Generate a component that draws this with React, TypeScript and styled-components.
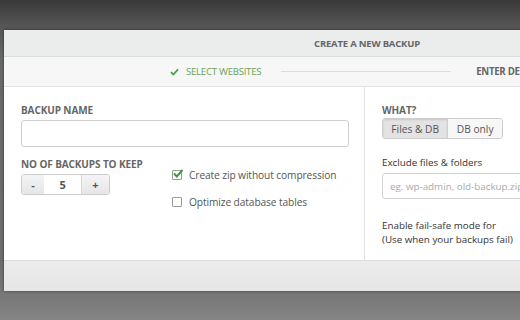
import React from "react";
import styled, { createGlobalStyle } from "styled-components";

const Global = createGlobalStyle`
  html, body { margin: 0; padding: 0; }
  body {
    width: 520px;
    height: 320px;
    overflow: hidden;
    background: linear-gradient(180deg, #383838 0px, #555 25px, #6a6a6a 60px, #6f6f6f 260px, #7a7a7a 300px, #858585 320px);
    font-family: "Open Sans", "DejaVu Sans", sans-serif;
  }
`;

const Page = styled.div`
  padding: 30px 0 0 4px;
`;

const Panel = styled.div`
  width: 726px;
  background: #fff;
  box-shadow: 0 0 3px rgba(0, 0, 0, 0.5);
  display: flex;
  flex-direction: column;
`;

const Header = styled.div`
  height: 26px;
  background: #ebeded;
  border-bottom: 1px solid #dcdede;
  display: flex;
  align-items: center;
  justify-content: center;
  font-size: 9.5px;
  font-weight: 700;
  color: #666;
  letter-spacing: -0.2px;
`;

const Steps = styled.div`
  height: 29px;
  background: #f7f7f7;
  border-bottom: 1px solid #e3e3e3;
  display: flex;
  align-items: center;
  padding-left: 166px;
`;

const Step = styled.div<{ $done?: boolean }>`
  display: flex;
  align-items: center;
  gap: 7px;
  font-size: 9.7px;
  font-weight: ${(p) => (p.$done ? 400 : 700)};
  color: ${(p) => (p.$done ? "#6aa35a" : "#666")};
  letter-spacing: -0.3px;
  white-space: nowrap;
`;

const StepLine = styled.div`
  width: 170px;
  height: 1px;
  background: #dcdcdc;
  margin: 0 25px 0 20px;
`;

const Body = styled.div`
  height: 173px;
  display: flex;
  border-bottom: 1px solid #dcdcdc;
`;

const LeftCol = styled.div`
  width: 343px;
  padding: 16px 0 0 17px;
  border-right: 1px solid #e2e2e2;
  display: flex;
  flex-direction: column;
`;

const RightCol = styled.div`
  flex: 1;
  padding: 16px 0 0 17px;
  display: flex;
  flex-direction: column;
`;

const Label = styled.div`
  font-size: 10px;
  font-weight: 700;
  color: #666;
  text-transform: uppercase;
  letter-spacing: -0.1px;
  line-height: 14px;
`;

const TextInput = styled.div`
  box-sizing: border-box;
  width: 328px;
  height: 27px;
  margin-top: 3px;
  border: 1px solid #cfcfcf;
  border-radius: 3px;
  background: #fff;
`;

const Row = styled.div`
  display: flex;
  margin-top: 10px;
`;

const KeepBlock = styled.div`
  width: 151px;
  display: flex;
  flex-direction: column;
`;

const Stepper = styled.div`
  display: flex;
  margin-top: 3px;
  width: 89px;
  height: 21px;
  box-sizing: border-box;
  border: 1px solid #cdcdcd;
  border-radius: 3px;
  overflow: hidden;
`;

const StepBtn = styled.div<{ $w: number; $bg?: boolean }>`
  width: ${(p) => p.$w}px;
  display: flex;
  align-items: center;
  justify-content: center;
  font-size: 11px;
  font-weight: 700;
  color: #555;
  background: ${(p) => (p.$bg ? "linear-gradient(#f4f4f4, #e6e6e6)" : "#fff")};
  border-left: ${(p) => (p.$bg ? "1px solid #d6d6d6" : "none")};
  &:first-child { border-left: none; }
`;

const Options = styled.div`
  display: flex;
  flex-direction: column;
  gap: 13px;
  padding-top: 11px;
`;

const Option = styled.div`
  display: flex;
  align-items: center;
  gap: 4px;
  font-size: 10.2px;
  color: #555;
  line-height: 14px;
  letter-spacing: -0.1px;
`;

const Box = styled.div`
  width: 8px;
  height: 8px;
  border: 1px solid #9a9a9a;
  border-radius: 1px;
  background: #fff;
  position: relative;
  margin-right: 3px;
`;

const Tick = styled.svg`
  position: absolute;
  left: -1px;
  top: -3px;
`;

const Segmented = styled.div`
  display: flex;
  margin-top: 1px;
  width: 121px;
  height: 21px;
  box-sizing: border-box;
  border: 1px solid #cdcdcd;
  border-radius: 3px;
  overflow: hidden;
`;

const Seg = styled.div<{ $active?: boolean; $w: number }>`
  width: ${(p) => p.$w}px;
  display: flex;
  align-items: center;
  justify-content: center;
  font-size: 10.2px;
  color: #555;
  background: ${(p) => (p.$active ? "#e3e3e3" : "#f7f7f7")};
  box-shadow: ${(p) => (p.$active ? "inset 0 1px 2px rgba(0,0,0,0.12)" : "none")};
  border-right: ${(p) => (p.$active ? "1px solid #d0d0d0" : "none")};
`;

const FieldLabel = styled.div`
  font-size: 9.8px;
  color: #333;
  margin-top: 17px;
  line-height: 14px;
`;

const Placeholder = styled.div`
  box-sizing: border-box;
  width: 160px;
  height: 26px;
  margin-top: 3px;
  border: 1px solid #d3d3d3;
  border-radius: 3px;
  padding-left: 7px;
  display: flex;
  align-items: center;
  font-size: 9.8px;
  color: #aaa;
  white-space: nowrap;
`;

const Note = styled.div`
  margin-top: 20px;
  font-size: 9.8px;
  color: #333;
  line-height: 14px;
  white-space: nowrap;
`;

const Footer = styled.div`
  height: 30px;
  background: linear-gradient(#ececec, #e6e6e6);
`;

export default function App() {
  return (
    <>
      <Global />
      <Page>
        <Panel>
          <Header>CREATE A NEW BACKUP</Header>
          <Steps>
            <Step $done>
              <svg width="9" height="8" viewBox="0 0 9 8">
                <path d="M1 4.2 L3.4 6.5 L8 1.4" fill="none" stroke="#4c9e4c" strokeWidth="1.8" />
              </svg>
              SELECT WEBSITES
            </Step>
            <StepLine />
            <Step>ENTER DETAILS</Step>
          </Steps>
          <Body>
            <LeftCol>
              <Label>Backup Name</Label>
              <TextInput />
              <Row>
                <KeepBlock>
                  <Label>No of backups to keep</Label>
                  <Stepper>
                    <StepBtn $w={23} $bg>-</StepBtn>
                    <StepBtn $w={38}>5</StepBtn>
                    <StepBtn $w={28} $bg>+</StepBtn>
                  </Stepper>
                </KeepBlock>
                <Options>
                  <Option>
                    <Box>
                      <Tick width="12" height="11" viewBox="0 0 12 11">
                        <path d="M2 5.5 L4.8 8.5 L10.5 2" fill="none" stroke="#3d9a3d" strokeWidth="2" />
                      </Tick>
                    </Box>
                    Create zip without compression
                  </Option>
                  <Option>
                    <Box />
                    Optimize database tables
                  </Option>
                </Options>
              </Row>
            </LeftCol>
            <RightCol>
              <Label>What?</Label>
              <Segmented>
                <Seg $active $w={66}>Files &amp; DB</Seg>
                <Seg $w={55}>DB only</Seg>
              </Segmented>
              <FieldLabel>Exclude files &amp; folders</FieldLabel>
              <Placeholder>eg. wp-admin, old-backup.zip</Placeholder>
              <Note>
                Enable fail-safe mode for
                <br />
                (Use when your backups fail)
              </Note>
            </RightCol>
          </Body>
          <Footer />
        </Panel>
      </Page>
    </>
  );
}
